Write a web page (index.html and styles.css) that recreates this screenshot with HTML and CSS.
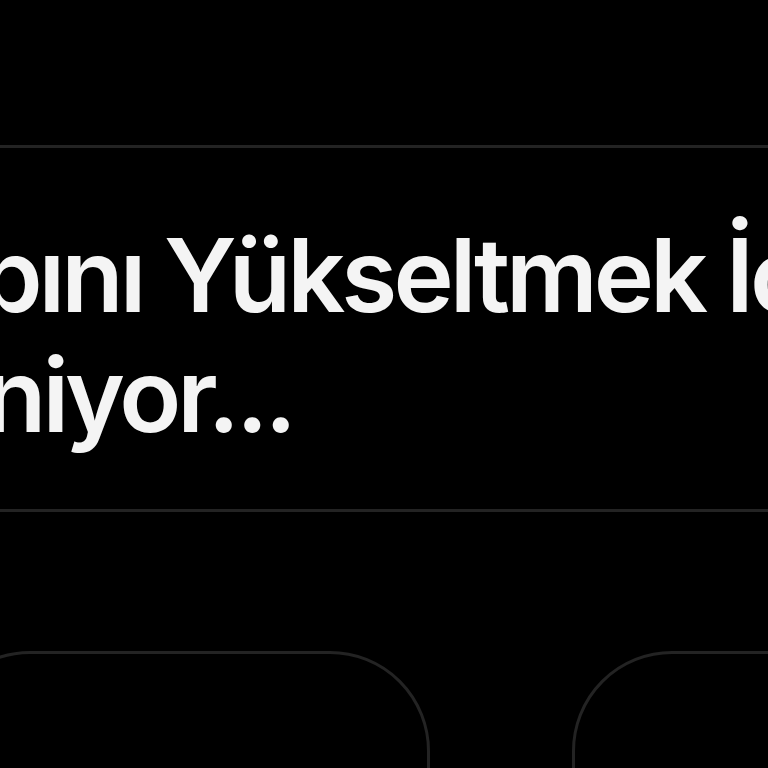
FILE: index.html
```html
<!DOCTYPE html>
<html lang="tr">
<head>
<meta charset="utf-8">
<link rel="stylesheet" href="styles.css">
</head>
<body>
<div class="screen">
  <section class="card">
    <h1 class="title">
      <span class="line line-1">Hesabını Yükseltmek İçin</span>
      <span class="line line-2">Onay Bekleniyor...</span>
    </h1>
  </section>
  <div class="actions">
    <div class="btn btn-left"></div>
    <div class="btn btn-right"></div>
  </div>
</div>
</body>
</html>
```
FILE: styles.css
```css
html, body {
  margin: 0;
  padding: 0;
  background: #000;
}
.screen {
  width: 768px;
  height: 768px;
  overflow: hidden;
  background: #000;
}
.card {
  margin: 145px -40px 0;
  border-top: 3px solid #232323;
  border-bottom: 3px solid #232323;
  padding: 67px 0 54px;
}
.title {
  margin: 0;
  font-family: Inter, "Noto Sans", sans-serif;
  font-weight: 600;
  font-size: 102px;
  line-height: 120px;
  color: #f4f4f4;
  white-space: nowrap;
  letter-spacing: -4px;
}
.line { display: block; }
.line-1 { margin-left: -216px; }
.line-2 { margin-left: -492px; }
.actions {
  display: flex;
  gap: 142px;
  margin: 139px 0 0 -70px;
}
.btn {
  flex: 0 0 500px;
  height: 300px;
  border: 3px solid #232323;
  border-radius: 100px;
  box-sizing: border-box;
}
```
